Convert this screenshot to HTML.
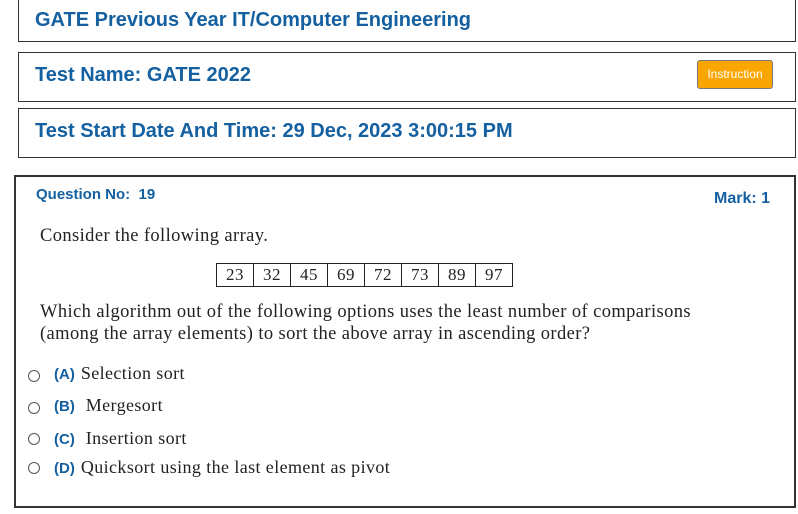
<!DOCTYPE html>
<html><head><style>
body{margin:0;width:798px;height:514px;background:#fff;position:relative;overflow:hidden;font-family:"Liberation Sans",sans-serif}
.b{position:absolute;left:18px;width:778px;border:1px solid #333;box-sizing:border-box;background:#fff}
.h{position:absolute;left:16px;font-weight:bold;font-size:20px;color:#1560a0;white-space:nowrap}
.s{font-family:"Liberation Serif",serif;color:#222;font-size:18.5px;letter-spacing:0.4px}
.abs{position:absolute}
.r{position:absolute;left:28px;width:12px;height:12px;border:1px solid #555;border-radius:50%;box-sizing:border-box}
.o{position:absolute;left:54px;font-size:18px;white-space:nowrap}
.o b{color:#1560a0;font-family:"Liberation Sans",sans-serif;font-size:15px;margin-right:6px;letter-spacing:0}
table{border-collapse:collapse}
td{border:1px solid #222;padding:0 9px;font-family:"Liberation Serif",serif;font-size:17px;color:#222;height:22px;line-height:20px;letter-spacing:0.5px}
</style></head><body>
<div class="b" style="top:-2px;height:44px"><div class="h" style="top:10px">GATE Previous Year IT/Computer Engineering</div></div>
<div class="b" style="top:52px;height:50px"><div class="h" style="top:11px">Test Name:&nbsp;GATE 2022</div>
<div class="abs" style="left:678px;top:7px;width:76px;height:29px;background:#f9a602;border:1px solid #777;border-radius:3px;box-sizing:border-box;color:#fff;font-size:12px;text-align:center;line-height:27px">Instruction</div></div>
<div class="b" style="top:108px;height:50px"><div class="h" style="top:11px">Test Start Date And Time: 29 Dec, 2023 3:00:15 PM</div></div>
<div class="abs" style="left:14px;top:175px;width:782px;height:333px;border:2px solid #333;box-sizing:border-box"></div>
<div class="abs" style="left:36px;top:186px;font-weight:bold;font-size:15px;color:#1560a0">Question No:&nbsp; 19</div>
<div class="abs" style="left:714px;top:190px;font-weight:bold;font-size:16px;color:#1560a0">Mark: 1</div>
<div class="abs s" style="left:40px;top:226px">Consider the following array.</div>
<table class="abs" style="left:216px;top:263px"><tr><td>23</td><td>32</td><td>45</td><td>69</td><td>72</td><td>73</td><td>89</td><td>97</td></tr></table>
<div class="abs s" style="left:40px;top:301px;line-height:22px;white-space:nowrap">Which algorithm out of the following options uses the least number of comparisons<br>(among the array elements) to sort the above array in ascending order?</div>
<div class="r" style="top:370px"></div><div class="o s" style="top:363px"><b>(A)</b>Selection sort</div>
<div class="r" style="top:402px"></div><div class="o s" style="top:395px"><b>(B)</b> Mergesort</div>
<div class="r" style="top:433px"></div><div class="o s" style="top:428px"><b>(C)</b> Insertion sort</div>
<div class="r" style="top:462px"></div><div class="o s" style="top:457px"><b>(D)</b>Quicksort using the last element as pivot</div>
</body></html>
